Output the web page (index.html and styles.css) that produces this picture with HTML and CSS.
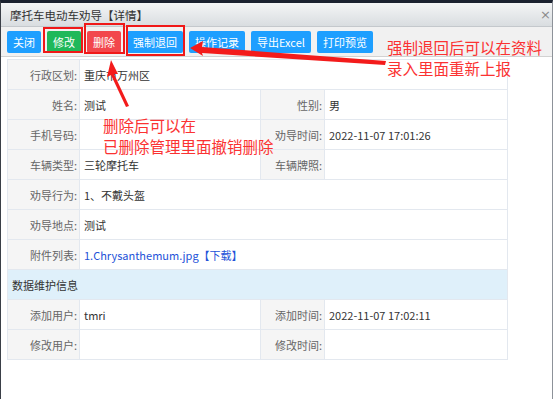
FILE: index.html
```html
<!DOCTYPE html>
<html lang="zh-CN">
<head>
  <meta charset="UTF-8" />
  <title>摩托车电动车劝导【详情】</title>
  <link rel="stylesheet" href="styles.css">
</head>
<body>
  <div class="window">
    <div class="titlebar">
      <span class="title">摩托车电动车劝导【详情】</span>
      <span class="close">×</span>
    </div>

    <div class="toolbar">
      <button class="btn">关闭</button>
      <button class="btn green">修改</button>
      <button class="btn red">删除</button>
      <button class="btn">强制退回</button>
      <button class="btn">操作记录</button>
      <button class="btn">导出Excel</button>
      <button class="btn">打印预览</button>
    </div>

    <div class="content">
      <table class="detail">
        <colgroup>
          <col class="c-label">
          <col class="c-value">
          <col class="c-label2">
          <col class="c-value2">
        </colgroup>
        <tr>
          <th>行政区划:</th>
          <td colspan="3">重庆市万州区</td>
        </tr>
        <tr>
          <th>姓名:</th>
          <td>测试</td>
          <th>性别:</th>
          <td>男</td>
        </tr>
        <tr>
          <th>手机号码:</th>
          <td></td>
          <th>劝导时间:</th>
          <td>2022-11-07 17:01:26</td>
        </tr>
        <tr>
          <th>车辆类型:</th>
          <td>三轮摩托车</td>
          <th>车辆牌照:</th>
          <td></td>
        </tr>
        <tr>
          <th>劝导行为:</th>
          <td colspan="3">1、不戴头盔</td>
        </tr>
        <tr>
          <th>劝导地点:</th>
          <td colspan="3">测试</td>
        </tr>
        <tr>
          <th>附件列表:</th>
          <td colspan="3"><a class="file" href="#">1.Chrysanthemum.jpg【下载】</a></td>
        </tr>
        <tr class="section">
          <td colspan="4">数据维护信息</td>
        </tr>
        <tr>
          <th>添加用户:</th>
          <td>tmri</td>
          <th>添加时间:</th>
          <td>2022-11-07 17:02:11</td>
        </tr>
        <tr>
          <th>修改用户:</th>
          <td></td>
          <th>修改时间:</th>
          <td></td>
        </tr>
      </table>
    </div>

    <!-- annotations drawn over the screenshot -->
    <svg class="marks" width="554" height="399" viewBox="0 0 554 399">
      <rect x="44" y="28" width="38" height="24" />
      <rect x="85" y="24" width="39" height="29" />
      <rect x="127" y="26" width="57" height="29" />
      <polygon class="arrow" points="190,48 203,41 202,47 386,61 385,65 202,53 203,56" />
      <polygon class="arrow" points="111,60 118,74 114,74 129,106 126,107 111,75 107,77" />
    </svg>
    <div class="note note-back">强制退回后可以在资料<br>录入里面重新上报</div>
    <div class="note note-del">删除后可以在<br>已删除管理里面撤销删除</div>
  </div>
</body>
</html>
```

FILE: styles.css
```css
* {
  box-sizing: border-box;
}

body {
  margin: 0;
  background: #fff;
  font-family: "Noto Sans CJK SC", "Noto Sans", sans-serif;
  font-size: 11px;
  color: #333;
  overflow: hidden;
}

.window {
  position: relative;
  width: 553px;
  height: 399px;
  border-top: 3px solid #1b2230;
  border-left: 1px solid #3a3f47;
  border-right: 1px solid #8d9299;
  background: #fff;
}

.titlebar {
  display: flex;
  align-items: center;
  justify-content: space-between;
  height: 24px;
  padding: 0 1px 0 9px;
  background: linear-gradient(to bottom, #f4f5f6, #d9dde0);
  border-bottom: 1px solid #c4c8cc;
}

.title {
  font-size: 11.5px;
  color: #333;
}

.close {
  font-family: "DejaVu Sans", sans-serif;
  font-size: 13px;
  color: #8a8a8a;
}

.toolbar {
  display: flex;
  align-items: center;
  gap: 6px;
  height: 30px;
  padding: 0 6px;
  background: #f1f1f1;
  border-bottom: 1px solid #d2d2d2;
}

.btn {
  height: 22px;
  padding: 0 6px;
  border: none;
  border-radius: 2px;
  background: #1e9fff;
  color: #fff;
  font-family: inherit;
  font-size: 11px;
  line-height: 22px;
  cursor: pointer;
}

.btn.green {
  background: #1fb85a;
}

.btn.red {
  background: #f2474c;
}

.content {
  padding: 2px 6px;
}

.detail {
  width: 500px;
  border-collapse: collapse;
  table-layout: fixed;
  border: 1px solid #dfe5ec;
}

.c-label { width: 72px; }
.c-value { width: 181px; }
.c-label2 { width: 64px; }
.c-value2 { width: 183px; }

.detail th,
.detail td {
  height: 30px;
  border: 1px solid #e3e8ef;
  font-size: 11px;
  font-weight: normal;
  white-space: nowrap;
}

.detail th {
  text-align: right;
  padding: 0 2px 0 0;
  background: #f5f5f5;
  color: #666;
}

.detail td {
  text-align: left;
  padding: 0 4px;
  color: #333;
}

.detail .section td {
  background: #dff0fa;
  padding-left: 4px;
}

.file {
  color: #2352d8;
  text-decoration: none;
}

.marks {
  position: absolute;
  top: -3px;
  left: -1px;
  pointer-events: none;
}

.marks rect {
  fill: none;
  stroke: #f01818;
  stroke-width: 2;
}

.marks .arrow {
  fill: #f31b1b;
}

.note {
  position: absolute;
  color: #fb3232;
  font-size: 15.5px;
  line-height: 21px;
}

.note-back {
  left: 386px;
  top: 34px;
}

.note-del {
  left: 102px;
  top: 112px;
}
```
